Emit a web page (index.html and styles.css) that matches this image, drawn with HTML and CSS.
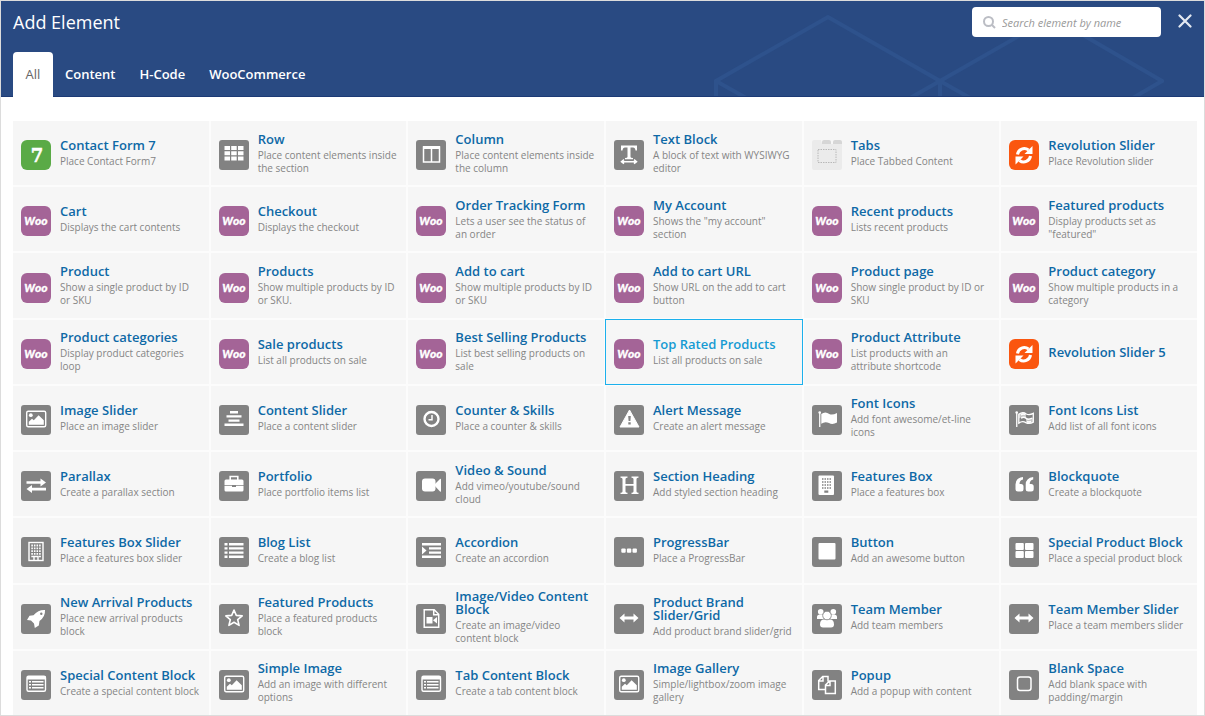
FILE: index.html
```html
<!DOCTYPE html>
<html lang="en">
<head>
<meta charset="utf-8">
<title>Add Element</title>
<link rel="stylesheet" href="styles.css">
</head>
<body>
<svg class="sprite" aria-hidden="true">
  <symbol id="woo" viewBox="0 0 30 30"><rect width="30" height="30" rx="6" fill="#a46497"/><text class="woo-mark" x="15" y="19" text-anchor="middle">W<tspan class="woo-oo">oo</tspan></text></symbol>
  <symbol id="cf7" viewBox="0 0 30 30"><rect width="30" height="30" rx="6" fill="#5aaa46"/><text class="seven-mark" x="16" y="22" text-anchor="middle">7</text></symbol>
  <symbol id="rev" viewBox="0 0 30 30"><rect width="30" height="30" rx="6" fill="#fa560f"/><path d="M8.500 14.500a6.800 6.800 0 0 1 11-4.500M21.500 16a6.800 6.800 0 0 1-11 4.500" fill="none" stroke="#fff" stroke-width="3"/><path d="M23.500 6v8h-8zM6.500 24.500v-8h8z" fill="#fff"/></symbol>
  <symbol id="tabs" viewBox="0 0 30 30"><path d="M0 2a2 2 0 0 1 2-2h7l1 4h20v24a2 2 0 0 1-2 2H2a2 2 0 0 1-2-2z" fill="#ebebeb"/><path d="M10 4V2q0-2 2-2h5q2 0 2 2v2zM21 4V2q0-2 2-2h5q2 0 2 2v2z" fill="#d6d6d6"/><rect x="6" y="9.500" width="18" height="13" fill="none" stroke="#b8b8b8" stroke-dasharray="1.500 1"/></symbol>
  <symbol id="grid" viewBox="0 0 30 30"><path d="M5.500 6h5.500v4H5.500zM12.200 6h5.500v4h-5.500zM19 6h5.500v4H19zM5.500 11.300h5.500v4H5.500zM12.200 11.300h5.500v4h-5.500zM19 11.300h5.500v4H19zM5.500 16.600h5.500v4H5.500zM12.200 16.600h5.500v4h-5.500zM19 16.600h5.500v4H19z" fill="#fff"/></symbol>
  <symbol id="columns" viewBox="0 0 30 30"><path d="M7.500 7h16v15h-16zM15.500 7v15" fill="none" stroke="#fff" stroke-width="1.500"/><path d="M7 6h17v3H7z" fill="#fff"/></symbol>
  <symbol id="text" viewBox="0 0 30 30"><path d="M7 5.500h16v5h-1.500q-.3-3-2.500-3h-2.500v9.500q0 1 2.500 1v1.200h-8V18q2.500 0 2.500-1V7.500H11q-2.200 0-2.500 3H7z" fill="#fff"/><path d="M9 21.700h12M10 19.700l-2.500 2 2.500 2M20 19.700l2.500 2-2.500 2" fill="none" stroke="#fff" stroke-width="1.500"/></symbol>
  <symbol id="image" viewBox="0 0 30 30"><rect x="5.700" y="6.200" width="19" height="15.500" rx="1.500" fill="none" stroke="#fff" stroke-width="1.400"/><circle cx="9.800" cy="10.200" r="1.900" fill="#fff"/><path d="M7.800 19.800v-3l3.200-3 1.800 1.500 4.800-5 5.200 5v4.500z" fill="#fff"/></symbol>
  <symbol id="center" viewBox="0 0 30 30"><path d="M11 6h8v2.400h-8zM7.500 10.200h15v2.400h-15zM9.500 14.400h11v2.400h-11zM5.500 18.600h19V21h-19z" fill="#fff"/></symbol>
  <symbol id="clock" viewBox="0 0 30 30"><circle cx="15.500" cy="14" r="7" fill="none" stroke="#fff" stroke-width="2.400"/><path d="M16 10v4.700h-3.500" fill="none" stroke="#fff" stroke-width="1.500"/></symbol>
  <symbol id="alert" viewBox="0 0 30 30"><path d="M15.500 5 25 22H6z" fill="#fff" stroke="#fff" stroke-linejoin="round"/><path d="M14.200 11h2.600l-.4 5h-1.800zM14.300 17.300h2.400v2.200h-2.400z" fill="#828282"/></symbol>
  <symbol id="flag" viewBox="0 0 30 30"><circle cx="7.700" cy="7.500" r="1.300" fill="#fff"/><path d="M7.100 8h1.300v14H7.100zM9.300 9q4-3 8 0 3 1.500 7.700-1v9.500q-4.500 2.500-8 .5-4-2-7.700.7z" fill="#fff"/></symbol>
  <symbol id="flag-check" viewBox="0 0 30 30"><circle cx="7.700" cy="7.500" r="1.300" fill="#fff"/><path d="M7.100 8h1.300v14H7.100z" fill="#fff"/><path d="M9.800 9.200q4-2.800 7.500-.2 3 1.500 7-.6v8.800q-4 2.200-7.500.4-3.500-2-7 .5z" fill="none" stroke="#fff" stroke-width="1.300"/><path d="M10 13.500q3.500-2.500 7-.5v-4q-3.500-2.300-7 .2zM17 13q3.500 1.500 7-.5v5q-3.500 1.800-7 0z" fill="#fff" opacity=".55"/><path d="M12 13.200q3-2 5 0t6 0M12 10q2-1.500 4-.5M18 16.500q2 1 4 0" fill="none" stroke="#fff" stroke-width="1.500"/></symbol>
  <symbol id="exchange" viewBox="0 0 30 30"><path d="M5.500 10.200h14V7.500l5.500 4-5.500 4v-2.700h-14zM25 16.800H11v-2.700l-5.500 4 5.500 4v-2.700h14z" fill="#fff"/></symbol>
  <symbol id="case" viewBox="0 0 30 30"><path d="M11.200 9V5.500h7.600V9" fill="none" stroke="#fff" stroke-width="1.600"/><path d="M5.500 10q0-1.500 1.500-1.500h16q1.500 0 1.500 1.500v4h-19zM5.500 14.800H13V16h4v-1.200h7.500V19q0 1.500-1.500 1.500H7q-1.500 0-1.500-1.500z" fill="#fff"/></symbol>
  <symbol id="video" viewBox="0 0 30 30"><rect x="6" y="7.500" width="13.500" height="13" rx="3" fill="#fff"/><path d="m18 14 6-6q1-.8 1 .5v11.500q0 1.300-1 .5z" fill="#fff"/></symbol>
  <symbol id="heading" viewBox="0 0 30 30"><path d="M6.500 5.500h7v1.200q-2 0-2 1.200v5h8v-5q0-1.200-2-1.200V5.500h7v1.200q-2 0-2 1.200v12.700q0 1.200 2 1.200V23h-7v-1.200q2 0 2-1.200v-5.900h-8v5.900q0 1.200 2 1.200V23h-7v-1.200q2 0 2-1.200V7.900q0-1.200-2-1.200z" fill="#fff"/></symbol>
  <symbol id="building-solid" viewBox="0 0 30 30"><rect x="6.500" y="4.500" width="15.500" height="19.500" rx="1" fill="#fff"/><path d="M10 8h9.500M10 11h9.500M10 14h9.500M10 17h9.500" stroke="#828282" stroke-width="1.500" stroke-dasharray="1.500 1"/><path d="M12.300 19.500h4v2.300h-4z" fill="#828282"/></symbol>
  <symbol id="building" viewBox="0 0 30 30"><rect x="8" y="5.500" width="14" height="18" fill="none" stroke="#fff" stroke-width="1.400"/><path d="M10.300 8.500h10M10.300 11.300h10M10.300 14.100h10M10.300 16.900h10" stroke="#fff" stroke-width="1.800" stroke-dasharray="1.600 1"/><path d="M10.300 19.500h2M17.900 19.500h2M13 23v-3.500h4V23" stroke="#fff" stroke-width="1.400" fill="none"/></symbol>
  <symbol id="quote" viewBox="0 0 30 30"><path d="M14 6v2.500q-3.500.5-3.500 4.500H12q2.500 0 2.500 2.500V18q0 2.500-2.500 2.500H9Q6.500 20.500 6.500 18v-4.500Q6.500 7 14 6zM24.200 6v2.500q-3.500.5-3.500 4.500h1.500q2.500 0 2.500 2.500V18q0 2.500-2.500 2.500h-3q-2.500 0-2.500-2.500v-4.500q0-6.500 7.500-7.500z" fill="#fff"/></symbol>
  <symbol id="list" viewBox="0 0 30 30"><path d="M5.500 6h3v2.400h-3zM10 6h14.500v2.400H10zM5.500 10.200h3v2.400h-3zM10 10.200h14.500v2.400H10zM5.500 14.400h3v2.400h-3zM10 14.400h14.500v2.400H10zM5.500 18.600h3V21h-3zM10 18.600h14.500V21H10z" fill="#fff"/></symbol>
  <symbol id="indent" viewBox="0 0 30 30"><path d="M6 6h19v2.400H6zM13 10.200h12v2.400H13zM13 14.400h12v2.400H13zM6 18.600h19V21H6zM6 9.500l4.500 4L6 17.500z" fill="#fff"/></symbol>
  <symbol id="dots" viewBox="0 0 30 30"><g fill="#fff"><rect x="7.300" y="11.500" width="4.400" height="4.200" rx="1"/><rect x="12.900" y="11.500" width="4.400" height="4.200" rx="1"/><rect x="18.500" y="11.500" width="4.400" height="4.200" rx="1"/></g></symbol>
  <symbol id="square" viewBox="0 0 30 30"><rect x="6.500" y="6" width="17" height="16.500" rx="1" fill="#fff"/></symbol>
  <symbol id="four" viewBox="0 0 30 30"><g fill="#fff"><rect x="6.500" y="6" width="8.300" height="7" rx="1"/><rect x="16" y="6" width="8.500" height="7" rx="1"/><rect x="6.500" y="14" width="8.300" height="7" rx="1"/><rect x="16" y="14" width="8.500" height="7" rx="1"/></g></symbol>
  <symbol id="rocket" viewBox="0 0 30 30"><path d="M24 6q.5 6.500-5.500 11l-.7 4.500-4 2.500-.8-4.500-3-3L6 16l2.500-4.200 4-.5Q17.500 5.500 24 6z" fill="#fff"/><circle cx="20.300" cy="9.700" r="1.200" fill="#828282"/></symbol>
  <symbol id="star" viewBox="0 0 30 30"><path d="m15 6 2.300 5.400 5.900.5-4.500 3.800 1.400 5.700-5.100-3.100-5.100 3.100 1.400-5.700-4.500-3.800 5.900-.5z" fill="none" stroke="#fff" stroke-width="1.600" stroke-linejoin="round"/></symbol>
  <symbol id="file-video" viewBox="0 0 30 30"><path d="M8.200 5.700h10l4.500 4.500v13H8.200zM17.700 5.700v5h5" fill="none" stroke="#fff" stroke-width="1.500"/><path d="M10.500 13h6v6.500h-6zM17 16.200l4-3.200v6.500z" fill="#fff"/></symbol>
  <symbol id="arrows" viewBox="0 0 30 30"><path d="m5.500 14 5-4.500v3h9v-3l5 4.500-5 4.500v-3h-9v3z" fill="#fff"/></symbol>
  <symbol id="team" viewBox="0 0 30 30"><g fill="#fff"><circle cx="8.700" cy="7.700" r="2.800"/><circle cx="21.300" cy="7.700" r="2.800"/><path d="M5 15v-2q0-2.500 3-2.500h3.500V15zM25 15v-2q0-2.500-3-2.500h-3.500V15z"/><path d="M8 20.500q0-5 4-5h6q4 0 4 5 0 3-3 3h-8q-3 0-3-3z"/></g><circle cx="15" cy="11.500" r="4.300" fill="#fff" stroke="#828282" stroke-width=".8"/></symbol>
  <symbol id="list-box" viewBox="0 0 30 30"><rect x="6" y="6.200" width="18.500" height="15" rx="1.500" fill="none" stroke="#fff" stroke-width="1.400"/><path d="M6 6h18.500v3.500H6zM8 11h2v1.600H8zM11 11h11.500v1.600H11zM8 14h2v1.600H8zM11 14h11.500v1.600H11zM8 17h2v1.600H8zM11 17h11.500v1.600H11z" fill="#fff"/></symbol>
  <symbol id="copy" viewBox="0 0 30 30"><path d="M13 19.500H6.700v-9l4-4H16v5M6.700 11H11V6.500M13.500 15l4-4h5.800v12.500h-9.800zM13.500 15.500H18V11" fill="none" stroke="#fff" stroke-width="1.500"/></symbol>
  <symbol id="blank" viewBox="0 0 30 30"><rect x="8.500" y="7" width="13.500" height="13.500" rx="2.500" fill="none" stroke="#fff" stroke-width="1.500"/></symbol>
</svg>

<main class="panel">
  <header class="head">
    <svg class="pattern" viewBox="0 -2 452 84" aria-hidden="true"><path d="M4 84V67L116 3l112 64v17M4 67l32 18M198 84l30-17L340 3l110 64-31 18M228 67l32 18" fill="none" stroke="#2e528c" stroke-width="4"/></svg>
    <div class="bar">
      <h1 class="title">Add Element</h1>
      <label class="search">
        <svg class="search-icon" viewBox="0 0 13 13" aria-hidden="true"><circle cx="5.500" cy="5.500" r="4.500"/><path d="m9 9 3 3"/></svg>
        <input type="search" placeholder="Search element by name" aria-label="Search element by name">
      </label>
      <button class="close" type="button" aria-label="Close"><svg viewBox="0 0 14 14"><path d="m1.500 1.500 11 11m0-11-11 11"/></svg></button>
    </div>
    <nav class="tabs">
      <button class="tab active" type="button">All</button>
      <button class="tab" type="button">Content</button>
      <button class="tab" type="button">H-Code</button>
      <button class="tab" type="button">WooCommerce</button>
    </nav>
  </header>

  <div class="elements">
    <a class="item" href="#"><svg class="logo"><use href="#cf7"/></svg><span class="body"><b>Contact Form 7</b><i>Place Contact Form7</i></span></a>
    <a class="item" href="#"><svg class="icon"><use href="#grid"/></svg><span class="body"><b>Row</b><i>Place content elements inside the section</i></span></a>
    <a class="item" href="#"><svg class="icon"><use href="#columns"/></svg><span class="body"><b>Column</b><i>Place content elements inside the column</i></span></a>
    <a class="item" href="#"><svg class="icon"><use href="#text"/></svg><span class="body"><b>Text Block</b><i>A block of text with WYSIWYG editor</i></span></a>
    <a class="item" href="#"><svg class="logo"><use href="#tabs"/></svg><span class="body"><b>Tabs</b><i>Place Tabbed Content</i></span></a>
    <a class="item" href="#"><svg class="logo"><use href="#rev"/></svg><span class="body"><b>Revolution Slider</b><i>Place Revolution slider</i></span></a>

    <a class="item" href="#"><svg class="logo"><use href="#woo"/></svg><span class="body"><b>Cart</b><i>Displays the cart contents</i></span></a>
    <a class="item" href="#"><svg class="logo"><use href="#woo"/></svg><span class="body"><b>Checkout</b><i>Displays the checkout</i></span></a>
    <a class="item" href="#"><svg class="logo"><use href="#woo"/></svg><span class="body"><b>Order Tracking Form</b><i>Lets a user see the status of an order</i></span></a>
    <a class="item" href="#"><svg class="logo"><use href="#woo"/></svg><span class="body"><b>My Account</b><i>Shows the "my account" section</i></span></a>
    <a class="item" href="#"><svg class="logo"><use href="#woo"/></svg><span class="body"><b>Recent products</b><i>Lists recent products</i></span></a>
    <a class="item" href="#"><svg class="logo"><use href="#woo"/></svg><span class="body"><b>Featured products</b><i>Display products set as "featured"</i></span></a>

    <a class="item" href="#"><svg class="logo"><use href="#woo"/></svg><span class="body"><b>Product</b><i>Show a single product by ID or SKU</i></span></a>
    <a class="item" href="#"><svg class="logo"><use href="#woo"/></svg><span class="body"><b>Products</b><i>Show multiple products by ID or SKU.</i></span></a>
    <a class="item" href="#"><svg class="logo"><use href="#woo"/></svg><span class="body"><b>Add to cart</b><i>Show multiple products by ID or SKU</i></span></a>
    <a class="item" href="#"><svg class="logo"><use href="#woo"/></svg><span class="body"><b>Add to cart URL</b><i>Show URL on the add to cart button</i></span></a>
    <a class="item" href="#"><svg class="logo"><use href="#woo"/></svg><span class="body"><b>Product page</b><i>Show single product by ID or SKU</i></span></a>
    <a class="item" href="#"><svg class="logo"><use href="#woo"/></svg><span class="body"><b>Product category</b><i>Show multiple products in a category</i></span></a>

    <a class="item" href="#"><svg class="logo"><use href="#woo"/></svg><span class="body"><b>Product categories</b><i>Display product categories loop</i></span></a>
    <a class="item" href="#"><svg class="logo"><use href="#woo"/></svg><span class="body"><b>Sale products</b><i>List all products on sale</i></span></a>
    <a class="item" href="#"><svg class="logo"><use href="#woo"/></svg><span class="body"><b>Best Selling Products</b><i>List best selling products on sale</i></span></a>
    <a class="item selected" href="#"><svg class="logo"><use href="#woo"/></svg><span class="body"><b>Top Rated Products</b><i>List all products on sale</i></span></a>
    <a class="item" href="#"><svg class="logo"><use href="#woo"/></svg><span class="body"><b>Product Attribute</b><i>List products with an attribute shortcode</i></span></a>
    <a class="item" href="#"><svg class="logo"><use href="#rev"/></svg><span class="body"><b>Revolution Slider 5</b></span></a>

    <a class="item" href="#"><svg class="icon"><use href="#image"/></svg><span class="body"><b>Image Slider</b><i>Place an image slider</i></span></a>
    <a class="item" href="#"><svg class="icon"><use href="#center"/></svg><span class="body"><b>Content Slider</b><i>Place a content slider</i></span></a>
    <a class="item" href="#"><svg class="icon"><use href="#clock"/></svg><span class="body"><b>Counter &amp; Skills</b><i>Place a counter &amp; skills</i></span></a>
    <a class="item" href="#"><svg class="icon"><use href="#alert"/></svg><span class="body"><b>Alert Message</b><i>Create an alert message</i></span></a>
    <a class="item" href="#"><svg class="icon"><use href="#flag"/></svg><span class="body"><b>Font Icons</b><i>Add font awesome/et-line icons</i></span></a>
    <a class="item" href="#"><svg class="icon"><use href="#flag-check"/></svg><span class="body"><b>Font Icons List</b><i>Add list of all font icons</i></span></a>

    <a class="item" href="#"><svg class="icon"><use href="#exchange"/></svg><span class="body"><b>Parallax</b><i>Create a parallax section</i></span></a>
    <a class="item" href="#"><svg class="icon"><use href="#case"/></svg><span class="body"><b>Portfolio</b><i>Place portfolio items list</i></span></a>
    <a class="item" href="#"><svg class="icon"><use href="#video"/></svg><span class="body"><b>Video &amp; Sound</b><i>Add vimeo/youtube/sound cloud</i></span></a>
    <a class="item" href="#"><svg class="icon"><use href="#heading"/></svg><span class="body"><b>Section Heading</b><i>Add styled section heading</i></span></a>
    <a class="item" href="#"><svg class="icon"><use href="#building-solid"/></svg><span class="body"><b>Features Box</b><i>Place a features box</i></span></a>
    <a class="item" href="#"><svg class="icon"><use href="#quote"/></svg><span class="body"><b>Blockquote</b><i>Create a blockquote</i></span></a>

    <a class="item" href="#"><svg class="icon"><use href="#building"/></svg><span class="body"><b>Features Box Slider</b><i>Place a features box slider</i></span></a>
    <a class="item" href="#"><svg class="icon"><use href="#list"/></svg><span class="body"><b>Blog List</b><i>Create a blog list</i></span></a>
    <a class="item" href="#"><svg class="icon"><use href="#indent"/></svg><span class="body"><b>Accordion</b><i>Create an accordion</i></span></a>
    <a class="item" href="#"><svg class="icon"><use href="#dots"/></svg><span class="body"><b>ProgressBar</b><i>Place a ProgressBar</i></span></a>
    <a class="item" href="#"><svg class="icon"><use href="#square"/></svg><span class="body"><b>Button</b><i>Add an awesome button</i></span></a>
    <a class="item" href="#"><svg class="icon"><use href="#four"/></svg><span class="body"><b>Special Product Block</b><i>Place a special product block</i></span></a>

    <a class="item" href="#"><svg class="icon"><use href="#rocket"/></svg><span class="body"><b>New Arrival Products</b><i>Place new arrival products block</i></span></a>
    <a class="item" href="#"><svg class="icon"><use href="#star"/></svg><span class="body"><b>Featured Products</b><i>Place a featured products block</i></span></a>
    <a class="item" href="#"><svg class="icon"><use href="#file-video"/></svg><span class="body"><b>Image/Video Content Block</b><i>Create an image/video content block</i></span></a>
    <a class="item" href="#"><svg class="icon"><use href="#arrows"/></svg><span class="body"><b>Product Brand Slider/Grid</b><i>Add product brand slider/grid</i></span></a>
    <a class="item" href="#"><svg class="icon"><use href="#team"/></svg><span class="body"><b>Team Member</b><i>Add team members</i></span></a>
    <a class="item" href="#"><svg class="icon"><use href="#arrows"/></svg><span class="body"><b>Team Member Slider</b><i>Place a team members slider</i></span></a>

    <a class="item" href="#"><svg class="icon"><use href="#list-box"/></svg><span class="body"><b>Special Content Block</b><i>Create a special content block</i></span></a>
    <a class="item" href="#"><svg class="icon"><use href="#image"/></svg><span class="body"><b>Simple Image</b><i>Add an image with different options</i></span></a>
    <a class="item" href="#"><svg class="icon"><use href="#list-box"/></svg><span class="body"><b>Tab Content Block</b><i>Create a tab content block</i></span></a>
    <a class="item" href="#"><svg class="icon"><use href="#image"/></svg><span class="body"><b>Image Gallery</b><i>Simple/lightbox/zoom image gallery</i></span></a>
    <a class="item" href="#"><svg class="icon"><use href="#copy"/></svg><span class="body"><b>Popup</b><i>Add a popup with content</i></span></a>
    <a class="item" href="#"><svg class="icon"><use href="#blank"/></svg><span class="body"><b>Blank Space</b><i>Add blank space with padding/margin</i></span></a>
  </div>
</main>
</body>
</html>
```

FILE: styles.css
```css
* { box-sizing: border-box; }
body {
  margin: 0;
  background: #fff;
  font-family: "Open Sans", "Noto Sans", sans-serif;
}
button, input { font: inherit; }
.sprite { display: none; }
.woo-mark { font: italic 900 11px Lato, sans-serif; fill: #fff; stroke: #fff; stroke-width: 0.3; }
.woo-oo { font-size: 12px; }
.seven-mark { font: bold 18px "DejaVu Serif", serif; fill: #fff; stroke: #fff; stroke-width: 0.5; }

.panel {
  display: flex;
  flex-direction: column;
  min-height: 100vh;
  border: 1px solid #dcdcdc;
}

.head {
  position: relative;
  padding: 6px 12px 0;
  background: #294a82;
  box-shadow: inset 0 -1px #1c3a75;
}
.pattern { position: absolute; right: 40px; bottom: 1px; width: 452px; height: 84px; }
.bar { position: relative; display: flex; align-items: center; height: 30px; }
.title { flex: 1; margin: 0; color: #fff; font-size: 18px; font-weight: 400; line-height: 30px; }
.search {
  display: flex;
  align-items: center;
  gap: 6px;
  width: 189px;
  height: 30px;
  padding: 0 11px;
  background: #fff;
  border-radius: 4px;
}
.search-icon { flex: none; width: 13px; height: 13px; fill: none; stroke: #bbbdc4; stroke-width: 2; }
.search input {
  flex: 1;
  min-width: 0;
  padding: 0;
  border: 0;
  outline: 0;
  background: none;
  color: #555;
  font-size: 11px;
  font-style: italic;
}
.search input::placeholder { color: #999; opacity: 1; }
.close { display: flex; margin: 0 -6px 2px 11px; padding: 6px; border: 0; background: none; }
.close svg { width: 14px; height: 14px; fill: none; stroke: #e4e9f1; stroke-width: 2.2; stroke-linecap: round; }

.tabs { position: relative; display: flex; margin-top: 15px; }
.tab {
  min-width: 40px;
  height: 45px;
  padding: 0 12px 1px;
  border: 0;
  border-radius: 4px 4px 0 0;
  background: none;
  color: #fff;
  font-size: 13px;
  font-weight: 600;
}
.tab.active { background: #fff; color: #666; font-weight: 400; }

.elements {
  flex: 1;
  display: grid;
  grid-template-columns: repeat(6, minmax(0, 1fr));
  grid-auto-rows: minmax(64px, 1fr);
  gap: 2px;
  margin: 24px 7px 0 12px;
  background: #fcfcfc;
}
.item {
  display: flex;
  align-items: center;
  gap: 9px;
  padding: 0 9px 0 8px;
  background: #f6f6f6;
  text-decoration: none;
}
.icon, .logo { flex: none; width: 30px; height: 30px; margin-top: 4px; }
.icon { background: #828282; border-radius: 3px; }
.body { min-width: 0; padding-top: 1px; }
.body b { display: block; color: #0e69a6; font-size: 13px; font-weight: 600; line-height: 13px; }
.body i { display: block; margin-top: 3px; color: #858585; font-size: 10px; font-style: normal; line-height: 13px; }
.item.selected { outline: 1px solid #1cb0ec; }
.item.selected b { color: #159bd3; }
```
